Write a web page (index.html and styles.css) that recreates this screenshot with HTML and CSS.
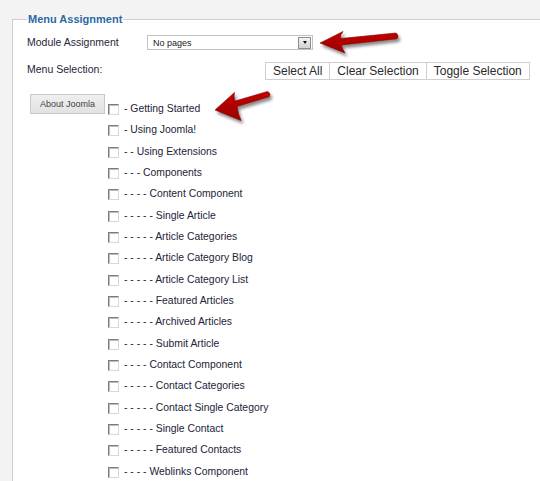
FILE: index.html
```html
<!DOCTYPE html>
<html>
<head>
<meta charset="utf-8">
<link rel="stylesheet" href="styles.css">
</head>
<body>
<div class="page">
  <fieldset class="panel">
    <legend class="legend">Menu Assignment</legend>
    <div class="row row-assign">
      <span class="label label-assign">Module Assignment</span>
      <div class="select">
        <span class="select-text">No pages</span>
        <span class="select-btn"><span class="tri"></span></span>
      </div>
    </div>
    <div class="row row-selection">
      <span class="label label-selection">Menu Selection:</span>
      <div class="btn-group">
        <span class="btn">Select All</span>
        <span class="btn">Clear Selection</span>
        <span class="btn">Toggle Selection</span>
      </div>
    </div>
    <div class="row row-menu">
      <span class="menu-tab">About Joomla</span>
      <ul class="items">
        <li class="item"><span class="cb"></span>- Getting Started</li>
        <li class="item"><span class="cb"></span>- Using Joomla!</li>
        <li class="item"><span class="cb"></span>- - Using Extensions</li>
        <li class="item"><span class="cb"></span>- - - Components</li>
        <li class="item"><span class="cb"></span>- - - - Content Component</li>
        <li class="item"><span class="cb"></span>- - - - - Single Article</li>
        <li class="item"><span class="cb"></span>- - - - - Article Categories</li>
        <li class="item"><span class="cb"></span>- - - - - Article Category Blog</li>
        <li class="item"><span class="cb"></span>- - - - - Article Category List</li>
        <li class="item"><span class="cb"></span>- - - - - Featured Articles</li>
        <li class="item"><span class="cb"></span>- - - - - Archived Articles</li>
        <li class="item"><span class="cb"></span>- - - - - Submit Article</li>
        <li class="item"><span class="cb"></span>- - - - Contact Component</li>
        <li class="item"><span class="cb"></span>- - - - - Contact Categories</li>
        <li class="item"><span class="cb"></span>- - - - - Contact Single Category</li>
        <li class="item"><span class="cb"></span>- - - - - Single Contact</li>
        <li class="item"><span class="cb"></span>- - - - - Featured Contacts</li>
        <li class="item"><span class="cb"></span>- - - - Weblinks Component</li>
      </ul>
    </div>
  </fieldset>
  <svg class="arrows" width="540" height="481" viewBox="0 0 540 481">
    <defs>
      <filter id="sh" x="-20%" y="-40%" width="150%" height="200%">
        <feDropShadow dx="2" dy="3" stdDeviation="1.6" flood-color="#000" flood-opacity="0.45"/>
      </filter>
      <linearGradient id="rg" x1="0" y1="0" x2="0" y2="1">
        <stop offset="0" stop-color="#c40000"/>
        <stop offset="1" stop-color="#9a0000"/>
      </linearGradient>
    </defs>
    <path filter="url(#sh)" fill="url(#rg)" stroke="#7d0000" stroke-width="0.6"
      d="M320 43 L343 31.5 Q340 35 340.5 38.5 L396 33 Q399.5 35.5 397 38.8 L341.5 45 Q342 49 345 53 Z"/>
    <path filter="url(#sh)" fill="url(#rg)" stroke="#7d0000" stroke-width="0.6"
      d="M215 110 L234.5 92.5 Q233.5 97 235 101 L267.5 91.5 Q271.5 93.5 269 96.8 L237 106.5 Q238 114 241 120.5 Z"/>
  </svg>
</div>
</body>
</html>
```
FILE: styles.css
```css
html, body {
  margin: 0;
  padding: 0;
}
body {
  background: #f3f3f3;
  font-family: "Liberation Sans", Arial, sans-serif;
  color: #333;
}
.page {
  position: relative;
  width: 540px;
  height: 481px;
  overflow: hidden;
}
.panel {
  margin: 13px 0 0 12px;
  padding: 9px 0 0 14px;
  border: 1px solid #cfcfcf;
  background: #fff;
  width: 620px;
  min-height: 560px;
  box-sizing: border-box;
}
.legend {
  font-size: 11px;
  font-weight: bold;
  line-height: 13px;
  color: #2b69a3;
  padding: 0 1px;
}
.row {
  display: flex;
}
.row-assign {
  align-items: center;
  height: 15px;
}
.label {
  font-size: 10.5px;
  line-height: 13px;
  color: #26263a;
}
.label-assign {
  width: 120px;
}
.select {
  width: 166px;
  height: 15px;
  box-sizing: border-box;
  border: 1px solid #c2c2c2;
  background: #fff;
  display: flex;
  align-items: center;
  justify-content: space-between;
  padding-left: 5px;
}
.select-text {
  font-size: 9px;
  color: #222;
}
.select-btn {
  width: 13px;
  height: 12px;
  box-sizing: border-box;
  border: 1px solid #8c8c8c;
  background: linear-gradient(#f4f4f4, #d2d2d2);
  margin-right: 1px;
  display: flex;
  align-items: center;
  justify-content: center;
}
.tri {
  width: 0;
  height: 0;
  border-left: 2.5px solid transparent;
  border-right: 2.5px solid transparent;
  border-top: 3px solid #111;
}
.row-selection {
  margin-top: 12px;
  align-items: flex-start;
}
.label-selection {
  width: 238px;
  margin-top: 1px;
}
.btn-group {
  display: flex;
}
.btn {
  font-size: 12px;
  line-height: 14px;
  padding: 1px 7px;
  border: 1px solid #cfcfcf;
  background: #fff;
  color: #2a2a2a;
  white-space: nowrap;
}
.btn + .btn {
  margin-left: -1px;
}
.row-menu {
  margin-top: 14px;
  align-items: flex-start;
}
.menu-tab {
  margin-left: 3px;
  width: 75px;
  height: 20px;
  box-sizing: border-box;
  border: 1px solid #c8c8c8;
  background: linear-gradient(#efefef, #e2e2e2);
  font-size: 9px;
  color: #444;
  display: flex;
  align-items: center;
  justify-content: center;
}
.items {
  list-style: none;
  margin: 0 0 0 3px;
  padding: 3.8px 0 0 0;
}
.item {
  height: 21.35px;
  display: flex;
  align-items: center;
  font-size: 10.4px;
  color: #232338;
  white-space: pre;
}
.cb {
  width: 11px;
  height: 11px;
  box-sizing: border-box;
  margin: 2px 5px 0 0;
  border: 1px solid;
  border-color: #7c7c7c #d8d8d8 #d8d8d8 #7c7c7c;
  box-shadow: inset 1px 1px 0 #bcbcbc;
  background: #fff;
}
.arrows {
  position: absolute;
  left: 0;
  top: 0;
  pointer-events: none;
}
```
